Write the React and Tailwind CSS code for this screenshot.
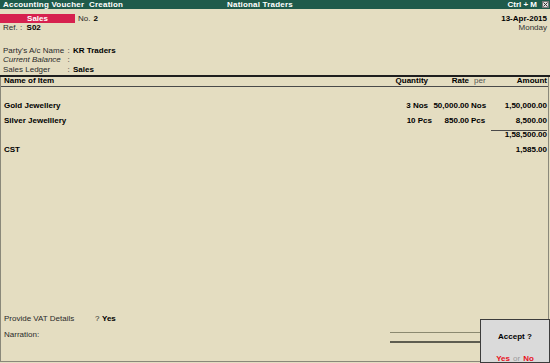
export default function App() {
  const row = "flex items-center pl-[3px] pr-[1px]";
  return (
    <div className="w-[550px] h-[363px] bg-[#e4ddc1] relative overflow-hidden flex flex-col text-[8px] leading-none text-[#2a2a2a] font-['Liberation_Sans',Arial,sans-serif]">
      {/* title bar */}
      <div className="h-[9px] shrink-0 bg-[#1f5b4b] text-white font-bold flex items-center pl-[3px] pr-[1px]">
        <span className="w-[224px] whitespace-pre tracking-[0.2px]">Accounting Voucher  Creation</span>
        <span className="tracking-[0.2px]">National Traders</span>
        <span className="ml-auto">Ctrl + M</span>
        <span className="ml-[5px] w-[7px] h-[7px] bg-[#dcdcdc] border border-[#777] flex items-center justify-center">
          <svg width="5" height="5" viewBox="0 0 5 5">
            <path d="M0.5 0.5 L4.5 4.5 M4.5 0.5 L0.5 4.5" stroke="#333" strokeWidth="1" />
          </svg>
        </span>
      </div>

      {/* voucher header */}
      <div className="mt-[5px] h-[9px] flex items-center pr-[3px]">
        <div className="w-[75px] h-full bg-[#d6214f] text-white font-bold flex items-center justify-center">Sales</div>
        <span className="ml-[3px]">No.</span>
        <span className="ml-[3px] font-bold text-black">2</span>
        <span className="ml-auto font-bold text-black">13-Apr-2015</span>
      </div>
      <div className="h-[9.5px] flex items-center pl-[3px] pr-[3px]">
        <span className="whitespace-pre">Ref. :  </span>
        <span className="font-bold text-black">S02</span>
        <span className="ml-auto text-[#333]">Monday</span>
      </div>

      <div className="mt-[13.5px] flex flex-col">
        <div className="h-[9.5px] flex items-center pl-[3px]">
          <span className="w-[64.5px]">Party's A/c Name</span>
          <span className="w-[5.5px]">:</span>
          <span className="font-bold text-black">KR Traders</span>
        </div>
        <div className="h-[9.5px] flex items-center pl-[3px]">
          <span className="w-[64.5px] italic">Current Balance</span>
          <span className="w-[5.5px]">:</span>
        </div>
        <div className="h-[9.5px] flex items-center pl-[3px]">
          <span className="w-[64.5px]">Sales Ledger</span>
          <span className="w-[5.5px]">:</span>
          <span className="font-bold text-black">Sales</span>
        </div>
      </div>

      <div className="h-[2px] bg-[#1e1e1e] shrink-0" />

      {/* table */}
      <div className="flex-1 flex flex-col border-l border-r border-b border-[#8a887a] mr-[1px] mb-[1px] relative">
        <div className={`${row} h-[10px] border-b border-[#4a4a4a] font-bold text-black`}>
          <span className="flex-1">Name of Item</span>
          <span className="w-[39px] text-right pr-[2px]">Quantity</span>
          <span className="w-[39px] text-right">Rate</span>
          <span className="w-[22px] pl-[5px] font-normal text-[#555]">per</span>
          <span className="w-[56px] text-right">Amount</span>
        </div>

        <div className="mt-[12.5px] flex flex-col font-bold text-black">
          <div className={`${row} h-[14.5px]`}>
            <span className="flex-1">Gold Jewellery</span>
            <span className="w-[39px] text-right pr-[2px]">3 Nos</span>
            <span className="w-[39px] text-right">50,000.00</span>
            <span className="w-[22px] pl-[2px]">Nos</span>
            <span className="w-[56px] text-right">1,50,000.00</span>
          </div>
          <div className={`${row} h-[14.5px]`}>
            <span className="flex-1">Silver Jewelllery</span>
            <span className="w-[39px] text-right pr-[2px]"><span className="mr-[-4px]">10 Pcs</span></span>
            <span className="w-[39px] text-right">850.00</span>
            <span className="w-[22px] pl-[2px]">Pcs</span>
            <span className="w-[56px] text-right">8,500.00</span>
          </div>
          <div className={`${row} mt-[1.5px] h-[9.5px]`}>
            <span className="flex-1" />
            <span className="w-[56px] h-full text-right border-t border-[#4a4a4a] flex items-center justify-end">1,58,500.00</span>
          </div>
          <div className={`${row} mt-[6px] h-[10px]`}>
            <span className="flex-1">CST</span>
            <span className="w-[56px] text-right">1,585.00</span>
          </div>
        </div>

        <div className="flex-1" />

        <div className="flex flex-col pb-[20.5px]">
          <div className="h-[10px] flex items-center pl-[3px]">
            <span className="w-[91px]">Provide VAT Details</span>
            <span className="w-[7px]">?</span>
            <span className="font-bold text-black">Yes</span>
          </div>
          <div className="mt-[6px] h-[11px] flex items-center pl-[3px] relative">
            <span>Narration:</span>
            <div className="absolute left-[389px] right-0 top-[2px] h-[1.5px] bg-[#8b8970]" />
            <div className="absolute left-[389px] right-0 top-[11.5px] h-[1.5px] bg-[#5e5d50]" />
          </div>
        </div>
      </div>

      {/* accept popup */}
      <div className="absolute right-0 bottom-0 w-[70px] h-[44px] bg-[#dadada] border-[1.5px] border-[#3c3c3c] flex flex-col items-center">
        <span className="mt-[13px] font-bold text-black">Accept ?</span>
        <span className="mt-[14px] font-bold">
          <span className="text-[#e8101c]">Yes</span>
          <span className="font-normal text-[#9a9a9a] mx-[3px]">or</span>
          <span className="text-[#e8101c]">No</span>
        </span>
      </div>
    </div>
  );
}
